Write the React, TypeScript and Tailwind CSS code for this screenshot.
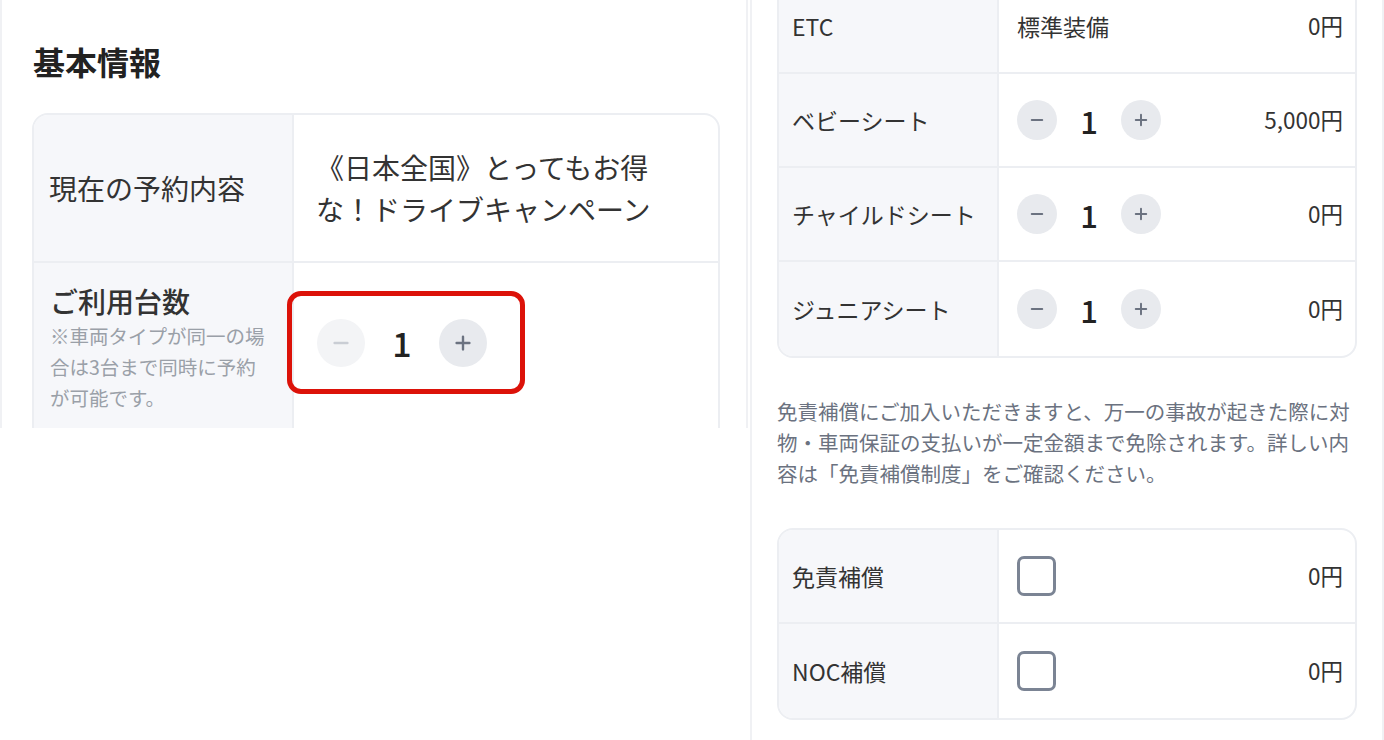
import React from 'react'

const FONT = { fontFamily: '"Noto Sans CJK JP", "Noto Sans", sans-serif' }

function Stepper({ size = 'sm', minusDisabled = false }: { size?: 'sm' | 'lg'; minusDisabled?: boolean }) {
  const lg = size === 'lg'
  const circle = lg ? 'w-[48px] h-[48px]' : 'w-[40px] h-[40px]'
  return (
    <div className="flex items-center">
      <button
        className={`${circle} rounded-full flex items-center justify-center ${minusDisabled ? 'bg-[#f3f4f6] text-[#c9cdd4]' : 'bg-[#e8eaee] text-[#6b7280]'}`}
      >
        <svg width={lg ? 22 : 18} height={lg ? 22 : 18} viewBox="0 0 24 24" fill="none" stroke="currentColor" strokeWidth={2.6} strokeLinecap="round">
          <path d="M5 12h14" />
        </svg>
      </button>
      <span className={`${lg ? 'w-[74px] text-[34px]' : 'w-[64px] text-[31px]'} text-center font-medium text-[#222] leading-none`}>1</span>
      <button className={`${circle} rounded-full flex items-center justify-center bg-[#e8eaee] text-[#6b7280]`}>
        <svg width={lg ? 22 : 18} height={lg ? 22 : 18} viewBox="0 0 24 24" fill="none" stroke="currentColor" strokeWidth={2.6} strokeLinecap="round">
          <path d="M5 12h14M12 5v14" />
        </svg>
      </button>
    </div>
  )
}

function Checkbox() {
  return <div className="w-[39px] h-[40px] rounded-[7px] border-[3px] border-[#7b8494] bg-white" />
}

function OptionRow({ label, children, price, last = false }: { label: string; children: React.ReactNode; price: string; last?: boolean }) {
  return (
    <div className={`flex h-[94px] ${last ? '' : 'border-b-2 border-[#eceef2]'}`}>
      <div className="w-[220px] shrink-0 bg-[#f6f7fa] border-r-2 border-[#eceef2] flex items-center pl-[13px] text-[23px] text-[#333]">
        {label}
      </div>
      <div className="flex-1 flex items-center justify-between pl-[18px] pr-[12px]">
        {children}
        <span className="text-[22.5px] text-[#333]">{price}</span>
      </div>
    </div>
  )
}

export default function App() {
  return (
    <div className="w-[1384px] h-[740px] bg-white flex items-start overflow-hidden" style={FONT}>
      {/* Left: 基本情報 */}
      <div className="w-[748px] h-[428px] shrink-0 border-x-2 border-[#f0f1f4] overflow-hidden">
        <h2 className="pl-[31px] pt-[38px] text-[32px] font-bold text-[#222] leading-[46px]">基本情報</h2>
        <div className="ml-[30px] mt-[29px] w-[688px] rounded-t-[16px] border-2 border-[#eceef2] overflow-hidden">
          <div className="flex h-[148px] border-b-2 border-[#eceef2]">
            <div className="w-[260px] shrink-0 bg-[#f6f7fa] border-r-2 border-[#eceef2] flex items-center pl-[15px] text-[28px] text-[#333]">
              現在の予約内容
            </div>
            <div className="flex-1 flex items-center pl-[22px]">
              <p className="w-[345px] text-[28px] leading-[42px] text-[#333]">
                《日本全国》とってもお得な！ドライブキャンペーン
              </p>
            </div>
          </div>
          <div className="flex h-[200px]">
            <div className="w-[260px] shrink-0 bg-[#f6f7fa] border-r-2 border-[#eceef2] pl-[16px] pr-[23px] pt-[19px]">
              <div className="text-[28px] font-medium text-[#333] leading-[38px]">ご利用台数</div>
              <div className="text-[19.5px] text-[#9aa0a8] leading-[31px]">
                ※車両タイプが同一の場合は3台まで同時に予約が可能です。
              </div>
            </div>
            <div className="flex-1 pt-[56px] pl-[23px]">
              <div className="relative inline-block">
                <Stepper size="lg" minusDisabled />
                <div className="absolute -left-[30px] -top-[28px] w-[238px] h-[103px] rounded-[14px] border-[5px] border-[#dc1209]" />
              </div>
            </div>
          </div>
        </div>
      </div>

      {/* Right: options */}
      <div className="ml-[2px] flex-1 h-[740px] border-x-2 border-[#f0f1f4] pl-[25px] pr-[25px]">
        <div className="-mt-[22px] rounded-b-[16px] border-2 border-[#eceef2] overflow-hidden">
          <OptionRow label="ETC" price="0円">
            <span className="text-[23px] text-[#333]">標準装備</span>
          </OptionRow>
          <OptionRow label="ベビーシート" price="5,000円">
            <Stepper />
          </OptionRow>
          <OptionRow label="チャイルドシート" price="0円">
            <Stepper />
          </OptionRow>
          <OptionRow label="ジュニアシート" price="0円" last>
            <Stepper />
          </OptionRow>
        </div>

        <p className="mt-[38px] text-[20.5px] leading-[31px] text-[#6b7280]">
          免責補償にご加入いただきますと、万一の事故が起きた際に対物・車両保証の支払いが一定金額まで免除されます。詳しい内容は「免責補償制度」をご確認ください。
        </p>

        <div className="mt-[39px] rounded-[16px] border-2 border-[#eceef2] overflow-hidden">
          <OptionRow label="免責補償" price="0円">
            <Checkbox />
          </OptionRow>
          <OptionRow label="NOC補償" price="0円" last>
            <Checkbox />
          </OptionRow>
        </div>
      </div>
    </div>
  )
}
